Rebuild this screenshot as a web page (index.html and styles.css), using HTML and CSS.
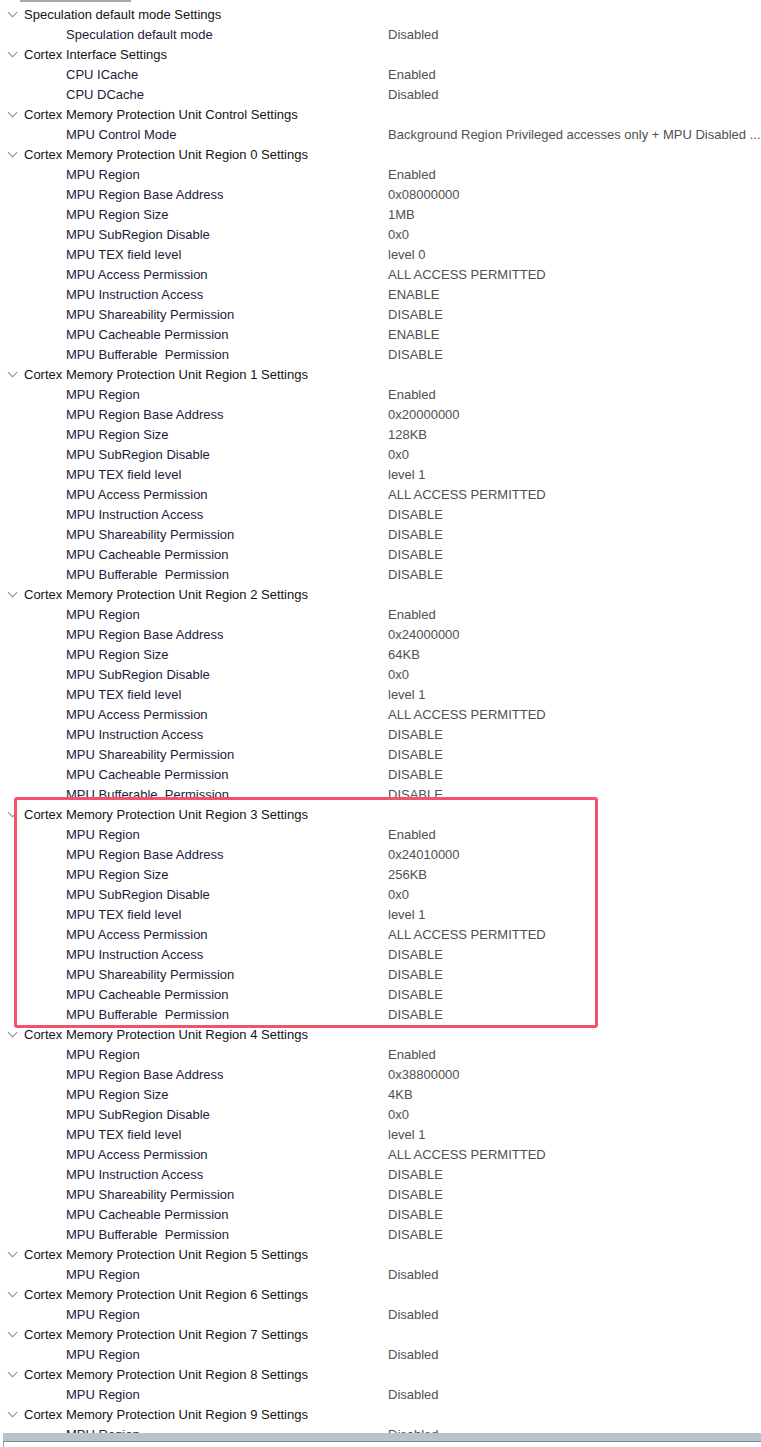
FILE: index.html
```html
<!DOCTYPE html>
<html>
<head>
<meta charset="utf-8">
<link rel="stylesheet" href="styles.css">
</head>
<body>
<div class="pane">
  <div class="topline"></div>
  <div class="tree">
    <div class="group">
      <div class="hdr"><span class="chev"></span>Speculation default mode Settings</div>
      <div class="row"><span class="lbl">Speculation default mode</span><span class="val">Disabled</span></div>
    </div>
    <div class="group">
      <div class="hdr"><span class="chev"></span>Cortex Interface Settings</div>
      <div class="row"><span class="lbl">CPU ICache</span><span class="val">Enabled</span></div>
      <div class="row"><span class="lbl">CPU DCache</span><span class="val">Disabled</span></div>
    </div>
    <div class="group">
      <div class="hdr"><span class="chev"></span>Cortex Memory Protection Unit Control Settings</div>
      <div class="row"><span class="lbl">MPU Control Mode</span><span class="val">Background Region Privileged accesses only + MPU Disabled ...</span></div>
    </div>
    <div class="group">
      <div class="hdr"><span class="chev"></span>Cortex Memory Protection Unit Region 0 Settings</div>
      <div class="row"><span class="lbl">MPU Region</span><span class="val">Enabled</span></div>
      <div class="row"><span class="lbl">MPU Region Base Address</span><span class="val">0x08000000</span></div>
      <div class="row"><span class="lbl">MPU Region Size</span><span class="val">1MB</span></div>
      <div class="row"><span class="lbl">MPU SubRegion Disable</span><span class="val">0x0</span></div>
      <div class="row"><span class="lbl">MPU TEX field level</span><span class="val">level 0</span></div>
      <div class="row"><span class="lbl">MPU Access Permission</span><span class="val">ALL ACCESS PERMITTED</span></div>
      <div class="row"><span class="lbl">MPU Instruction Access</span><span class="val">ENABLE</span></div>
      <div class="row"><span class="lbl">MPU Shareability Permission</span><span class="val">DISABLE</span></div>
      <div class="row"><span class="lbl">MPU Cacheable Permission</span><span class="val">ENABLE</span></div>
      <div class="row"><span class="lbl">MPU Bufferable&nbsp; Permission</span><span class="val">DISABLE</span></div>
    </div>
    <div class="group">
      <div class="hdr"><span class="chev"></span>Cortex Memory Protection Unit Region 1 Settings</div>
      <div class="row"><span class="lbl">MPU Region</span><span class="val">Enabled</span></div>
      <div class="row"><span class="lbl">MPU Region Base Address</span><span class="val">0x20000000</span></div>
      <div class="row"><span class="lbl">MPU Region Size</span><span class="val">128KB</span></div>
      <div class="row"><span class="lbl">MPU SubRegion Disable</span><span class="val">0x0</span></div>
      <div class="row"><span class="lbl">MPU TEX field level</span><span class="val">level 1</span></div>
      <div class="row"><span class="lbl">MPU Access Permission</span><span class="val">ALL ACCESS PERMITTED</span></div>
      <div class="row"><span class="lbl">MPU Instruction Access</span><span class="val">DISABLE</span></div>
      <div class="row"><span class="lbl">MPU Shareability Permission</span><span class="val">DISABLE</span></div>
      <div class="row"><span class="lbl">MPU Cacheable Permission</span><span class="val">DISABLE</span></div>
      <div class="row"><span class="lbl">MPU Bufferable&nbsp; Permission</span><span class="val">DISABLE</span></div>
    </div>
    <div class="group">
      <div class="hdr"><span class="chev"></span>Cortex Memory Protection Unit Region 2 Settings</div>
      <div class="row"><span class="lbl">MPU Region</span><span class="val">Enabled</span></div>
      <div class="row"><span class="lbl">MPU Region Base Address</span><span class="val">0x24000000</span></div>
      <div class="row"><span class="lbl">MPU Region Size</span><span class="val">64KB</span></div>
      <div class="row"><span class="lbl">MPU SubRegion Disable</span><span class="val">0x0</span></div>
      <div class="row"><span class="lbl">MPU TEX field level</span><span class="val">level 1</span></div>
      <div class="row"><span class="lbl">MPU Access Permission</span><span class="val">ALL ACCESS PERMITTED</span></div>
      <div class="row"><span class="lbl">MPU Instruction Access</span><span class="val">DISABLE</span></div>
      <div class="row"><span class="lbl">MPU Shareability Permission</span><span class="val">DISABLE</span></div>
      <div class="row"><span class="lbl">MPU Cacheable Permission</span><span class="val">DISABLE</span></div>
      <div class="row"><span class="lbl">MPU Bufferable&nbsp; Permission</span><span class="val">DISABLE</span></div>
    </div>
    <div class="group highlighted">
      <div class="hdr"><span class="chev"></span>Cortex Memory Protection Unit Region 3 Settings</div>
      <div class="row"><span class="lbl">MPU Region</span><span class="val">Enabled</span></div>
      <div class="row"><span class="lbl">MPU Region Base Address</span><span class="val">0x24010000</span></div>
      <div class="row"><span class="lbl">MPU Region Size</span><span class="val">256KB</span></div>
      <div class="row"><span class="lbl">MPU SubRegion Disable</span><span class="val">0x0</span></div>
      <div class="row"><span class="lbl">MPU TEX field level</span><span class="val">level 1</span></div>
      <div class="row"><span class="lbl">MPU Access Permission</span><span class="val">ALL ACCESS PERMITTED</span></div>
      <div class="row"><span class="lbl">MPU Instruction Access</span><span class="val">DISABLE</span></div>
      <div class="row"><span class="lbl">MPU Shareability Permission</span><span class="val">DISABLE</span></div>
      <div class="row"><span class="lbl">MPU Cacheable Permission</span><span class="val">DISABLE</span></div>
      <div class="row"><span class="lbl">MPU Bufferable&nbsp; Permission</span><span class="val">DISABLE</span></div>
    </div>
    <div class="group">
      <div class="hdr"><span class="chev"></span>Cortex Memory Protection Unit Region 4 Settings</div>
      <div class="row"><span class="lbl">MPU Region</span><span class="val">Enabled</span></div>
      <div class="row"><span class="lbl">MPU Region Base Address</span><span class="val">0x38800000</span></div>
      <div class="row"><span class="lbl">MPU Region Size</span><span class="val">4KB</span></div>
      <div class="row"><span class="lbl">MPU SubRegion Disable</span><span class="val">0x0</span></div>
      <div class="row"><span class="lbl">MPU TEX field level</span><span class="val">level 1</span></div>
      <div class="row"><span class="lbl">MPU Access Permission</span><span class="val">ALL ACCESS PERMITTED</span></div>
      <div class="row"><span class="lbl">MPU Instruction Access</span><span class="val">DISABLE</span></div>
      <div class="row"><span class="lbl">MPU Shareability Permission</span><span class="val">DISABLE</span></div>
      <div class="row"><span class="lbl">MPU Cacheable Permission</span><span class="val">DISABLE</span></div>
      <div class="row"><span class="lbl">MPU Bufferable&nbsp; Permission</span><span class="val">DISABLE</span></div>
    </div>
    <div class="group">
      <div class="hdr"><span class="chev"></span>Cortex Memory Protection Unit Region 5 Settings</div>
      <div class="row"><span class="lbl">MPU Region</span><span class="val">Disabled</span></div>
    </div>
    <div class="group">
      <div class="hdr"><span class="chev"></span>Cortex Memory Protection Unit Region 6 Settings</div>
      <div class="row"><span class="lbl">MPU Region</span><span class="val">Disabled</span></div>
    </div>
    <div class="group">
      <div class="hdr"><span class="chev"></span>Cortex Memory Protection Unit Region 7 Settings</div>
      <div class="row"><span class="lbl">MPU Region</span><span class="val">Disabled</span></div>
    </div>
    <div class="group">
      <div class="hdr"><span class="chev"></span>Cortex Memory Protection Unit Region 8 Settings</div>
      <div class="row"><span class="lbl">MPU Region</span><span class="val">Disabled</span></div>
    </div>
    <div class="group">
      <div class="hdr"><span class="chev"></span>Cortex Memory Protection Unit Region 9 Settings</div>
      <div class="row"><span class="lbl">MPU Region</span><span class="val">Disabled</span></div>
    </div>
  </div>
  <div class="splitter"></div>
  <div class="below"></div>
</div>
</body>
</html>
```
FILE: styles.css
```css
html, body {
  margin: 0;
  padding: 0;
  background: #ffffff;
}
body {
  font-family: "Liberation Sans", Arial, sans-serif;
  font-size: 13px;
  width: 761px;
  height: 1447px;
  overflow: hidden;
}
.pane {
  display: flex;
  flex-direction: column;
  height: 1447px;
}
.topline {
  margin-left: 20px;
  width: 111px;
  height: 2px;
  background: #a9a9a9;
  flex: none;
}
.tree {
  height: 1431px;
  padding-top: 3px;
  box-sizing: border-box;
  overflow: hidden;
  flex: none;
}
.group {
  position: relative;
}
.hdr, .row {
  height: 20px;
  line-height: 20px;
  display: flex;
  white-space: nowrap;
}
.hdr {
  color: #141414;
  padding-left: 8px;
}
.chev {
  width: 16px;
  height: 20px;
  flex: none;
  position: relative;
}
.chev::before {
  content: "";
  position: absolute;
  left: 1px;
  top: 4px;
  width: 6px;
  height: 6px;
  border-right: 1px solid #8a8a8a;
  border-bottom: 1px solid #8a8a8a;
  transform: rotate(45deg);
}
.row {
  padding-left: 66px;
}
.lbl {
  width: 322px;
  flex: none;
  color: #1c1c3a;
}
.val {
  color: #505050;
}
.highlighted::after {
  content: "";
  position: absolute;
  left: 14px;
  right: 163px;
  top: -8px;
  bottom: -3px;
  border: 3px solid #f2536a;
  border-radius: 3px;
}
.splitter {
  flex: none;
  margin-left: 3px;
  height: 8px;
  background: #b9c4ca;
  border-bottom: 1px solid #7b8b9b;
}
.below {
  flex: 1;
  margin-left: 3px;
  border-left: 1px solid #9aa4ae;
}
```
